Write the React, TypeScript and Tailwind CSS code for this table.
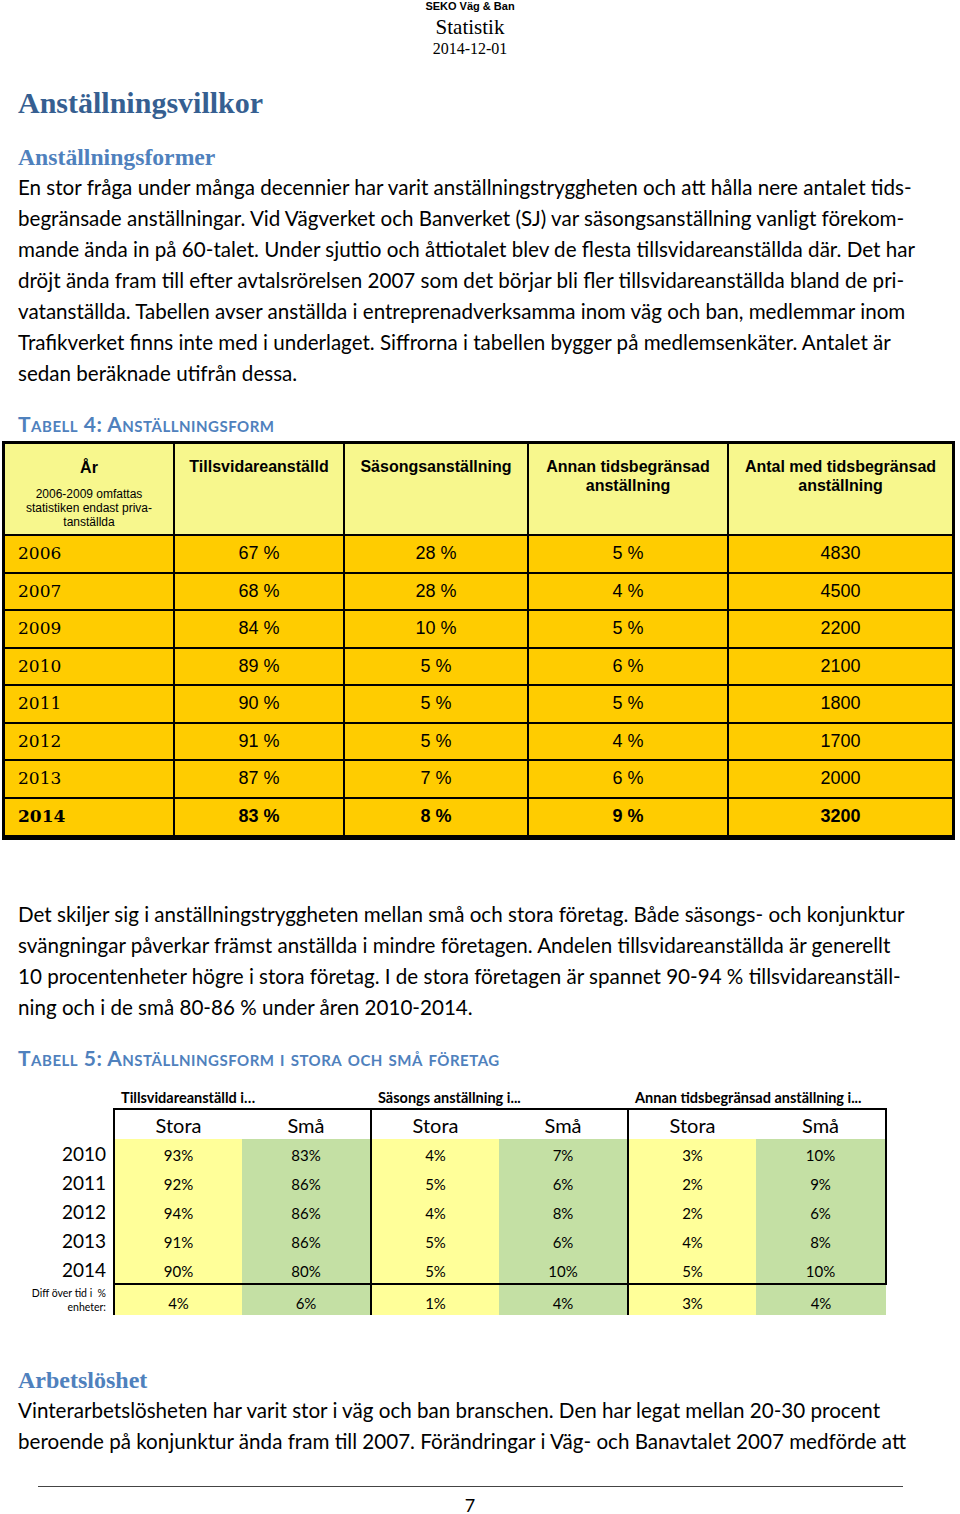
const body = "[font-family:Lato,'Open_Sans',sans-serif]";
const serifHead = "[font-family:'Liberation_Serif',serif]";
const arial = "[font-family:'Liberation_Sans',Arial,sans-serif]";
const yearFont = "[font-family:'DejaVu_Serif',serif]";

const p1 = [
  "En stor fråga under många decennier har varit anställningstryggheten och att hålla nere antalet tids-",
  "begränsade anställningar. Vid Vägverket och Banverket (SJ) var säsongsanställning vanligt förekom-",
  "mande ända in på 60-talet. Under sjuttio och åttiotalet blev de flesta tillsvidareanställda där. Det har",
  "dröjt ända fram till efter avtalsrörelsen 2007 som det börjar bli fler tillsvidareanställda bland de pri-",
  "vatanställda. Tabellen avser anställda i entreprenadverksamma inom väg och ban, medlemmar inom",
  "Trafikverket finns inte med i underlaget. Siffrorna i tabellen bygger på medlemsenkäter. Antalet är",
  "sedan beräknade utifrån dessa.",
];

const p2 = [
  "Det skiljer sig i anställningstryggheten mellan små och stora företag. Både säsongs- och konjunktur",
  "svängningar påverkar främst anställda i mindre företagen. Andelen tillsvidareanställda är generellt",
  "10 procentenheter högre i stora företag. I de stora företagen är spannet 90-94 % tillsvidareanställ-",
  "ning och i de små 80-86 % under åren 2010-2014.",
];

const p3 = [
  "Vinterarbetslösheten har varit stor i väg och ban branschen. Den har legat mellan 20-30 procent",
  "beroende på konjunktur ända fram till 2007. Förändringar i Väg- och Banavtalet 2007 medförde att",
];

const table4 = [
  ["2006", "67 %", "28 %", "5 %", "4830"],
  ["2007", "68 %", "28 %", "4 %", "4500"],
  ["2009", "84 %", "10 %", "5 %", "2200"],
  ["2010", "89 %", "5 %", "6 %", "2100"],
  ["2011", "90 %", "5 %", "5 %", "1800"],
  ["2012", "91 %", "5 %", "4 %", "1700"],
  ["2013", "87 %", "7 %", "6 %", "2000"],
  ["2014", "83 %", "8 %", "9 %", "3200"],
];

const table5 = [
  ["2010", "93%", "83%", "4%", "7%", "3%", "10%"],
  ["2011", "92%", "86%", "5%", "6%", "2%", "9%"],
  ["2012", "94%", "86%", "4%", "8%", "2%", "6%"],
  ["2013", "91%", "86%", "5%", "6%", "4%", "8%"],
  ["2014", "90%", "80%", "5%", "10%", "5%", "10%"],
];
const diff = ["4%", "6%", "1%", "4%", "3%", "4%"];

function Lines({ lines }: { lines: string[] }) {
  return (
    <div className={`${body} text-[20.6px] leading-[31px] text-black pl-[18px]`}>
      {lines.map((l) => (
        <div key={l} className="whitespace-nowrap">
          {l}
        </div>
      ))}
    </div>
  );
}

function Caption({ children }: { children: React.ReactNode }) {
  return (
    <div className={`${body} [font-variant:small-caps] font-bold text-[21px] tracking-[0.5px] leading-[22px] text-[#4f81bd] pl-[18px]`}>
      {children}
    </div>
  );
}

const App = () => {
  return (
    <div className="w-[960px] min-h-[1514px] bg-white">
      {/* Page header */}
      <div className="w-[940px] flex flex-col items-center">
        <div className={`${arial} font-bold text-[11px] leading-[12px]`}>SEKO Väg &amp; Ban</div>
        <div className={`${serifHead} text-[21px] leading-[26px] mt-[2px]`}>Statistik</div>
        <div className={`${serifHead} text-[16px] leading-[18px]`}>2014-12-01</div>
      </div>

      <h1 className={`${serifHead} font-bold text-[30px] leading-[34px] text-[#365f91] pl-[18px] mt-[28px]`}>
        Anställningsvillkor
      </h1>
      <h2 className={`${serifHead} font-bold text-[23.7px] leading-[26px] text-[#4f81bd] pl-[18px] mt-[24px]`}>
        Anställningsformer
      </h2>
      <div className="mt-[2px]">
        <Lines lines={p1} />
      </div>

      <div className="mt-[24px]">
        <Caption>Tabell 4: Anställningsform</Caption>
      </div>

      {/* Table 4 */}
      <div className="ml-[2px] mt-[6px] w-[953px] border-[3px] border-b-[5px] border-black">
        <table className={`${arial} w-full table-fixed border-collapse`}>
          <colgroup>
            <col className="w-[169px]" />
            <col className="w-[170px]" />
            <col className="w-[184px]" />
            <col className="w-[200px]" />
            <col />
          </colgroup>
          <thead>
            <tr className="bg-[#f7f78d] h-[91px] align-top">
              <th className="border-r-2 border-b-2 border-black pt-[14px] font-normal">
                <div className="font-bold text-[16px] leading-[20px]">År</div>
                <div className="text-[12px] leading-[14px] mt-[9px]">
                  2006-2009 omfattas
                  <br />
                  statistiken endast priva-
                  <br />
                  tanställda
                </div>
              </th>
              <th className="border-r-2 border-b-2 border-black pt-[13px] text-[16px] leading-[19px] font-bold">
                Tillsvidareanställd
              </th>
              <th className="border-r-2 border-b-2 border-black pt-[13px] text-[16px] leading-[19px] font-bold">
                Säsongsanställning
              </th>
              <th className="border-r-2 border-b-2 border-black pt-[13px] text-[16px] leading-[19px] font-bold">
                Annan tidsbegränsad
                <br />
                anställning
              </th>
              <th className="border-b-2 border-black pt-[13px] text-[16px] leading-[19px] font-bold">
                Antal med tidsbegränsad
                <br />
                anställning
              </th>
            </tr>
          </thead>
          <tbody>
            {table4.map((r, i) => {
              const last = i === table4.length - 1;
              return (
                <tr key={r[0]} className={`bg-[#ffcc00] h-[37.5px] ${last ? "font-bold" : ""}`}>
                  <td
                    className={`${yearFont} text-[17px] pl-[13px] border-r-2 border-black ${last ? "" : "border-b-2"}`}
                  >
                    {r[0]}
                  </td>
                  {r.slice(1).map((v, j) => (
                    <td
                      key={j}
                      className={`text-center text-[18px] border-black ${j < 3 ? "border-r-2" : ""} ${last ? "" : "border-b-2"}`}
                    >
                      {v}
                    </td>
                  ))}
                </tr>
              );
            })}
          </tbody>
        </table>
      </div>

      <div className="mt-[59px]">
        <Lines lines={p2} />
      </div>

      <div className="mt-[24px]">
        <Caption>Tabell 5: Anställningsform i stora och små företag</Caption>
      </div>

      {/* Table 5 */}
      <table className={`${body} mt-[20px] table-fixed border-collapse w-[886px]`}>
        <colgroup>
          <col className="w-[114px]" />
          <col className="w-[128px]" />
          <col className="w-[129px]" />
          <col className="w-[128px]" />
          <col className="w-[129px]" />
          <col className="w-[128px]" />
          <col className="w-[130px]" />
        </colgroup>
        <tbody>
          <tr className="h-[20px]">
            <td />
            {["Tillsvidareanställd i…", "Säsongs anställning i...", "Annan tidsbegränsad anställning i..."].map((g) => (
              <td key={g} colSpan={2} className="pl-[7px] text-[14.5px] font-bold leading-[18px] whitespace-nowrap align-top">
                {g}
              </td>
            ))}
          </tr>
          <tr className="h-[30px]">
            <td />
            {[0, 1, 2, 3, 4, 5].map((k) => (
              <td
                key={k}
                className={`bg-white text-center text-[20px] leading-[26px] border-t-2 border-black ${k % 2 === 0 ? "border-l-2" : ""} ${k === 5 ? "border-r-2" : ""}`}
              >
                {k % 2 === 0 ? "Stora" : "Små"}
              </td>
            ))}
          </tr>
          {table5.map((r, i) => (
            <tr key={r[0]} className="h-[29px]">
              <td className="text-right pr-[7px] text-[19px] leading-[20px]">{r[0]}</td>
              {r.slice(1).map((v, k) => (
                <td
                  key={k}
                  className={`text-center text-[15px] pt-[4px] border-black ${k % 2 === 0 ? "bg-[#ffff99] border-l-2" : "bg-[#c4e0a4]"} ${k === 5 ? "border-r-2" : ""} ${i === table5.length - 1 ? "border-b-2" : ""}`}
                >
                  {v}
                </td>
              ))}
            </tr>
          ))}
          <tr className="h-[31px]">
            <td className="text-right pr-[7px] text-[10.5px] leading-[14px] align-top pt-[2px]">
              Diff över tid i&nbsp; %
              <br />
              enheter:
            </td>
            {diff.map((v, k) => (
              <td
                key={k}
                className={`text-center text-[15px] pt-[6px] border-black ${k % 2 === 0 ? "bg-[#ffff99] border-l-2" : "bg-[#c4e0a4]"}`}
              >
                {v}
              </td>
            ))}
          </tr>
        </tbody>
      </table>

      <h2 className={`${serifHead} font-bold text-[24px] leading-[26px] text-[#4f81bd] pl-[18px] mt-[52px]`}>
        Arbetslöshet
      </h2>
      <div className="mt-[2px]">
        <Lines lines={p3} />
      </div>

      {/* Footer */}
      <div className="mt-[29px] ml-[38px] w-[865px] border-t border-[#444]" />
      <div className={`${body} w-[940px] text-center text-[18px] leading-[18px] mt-[9px]`}>7</div>
    </div>
  );
};

export default App;
